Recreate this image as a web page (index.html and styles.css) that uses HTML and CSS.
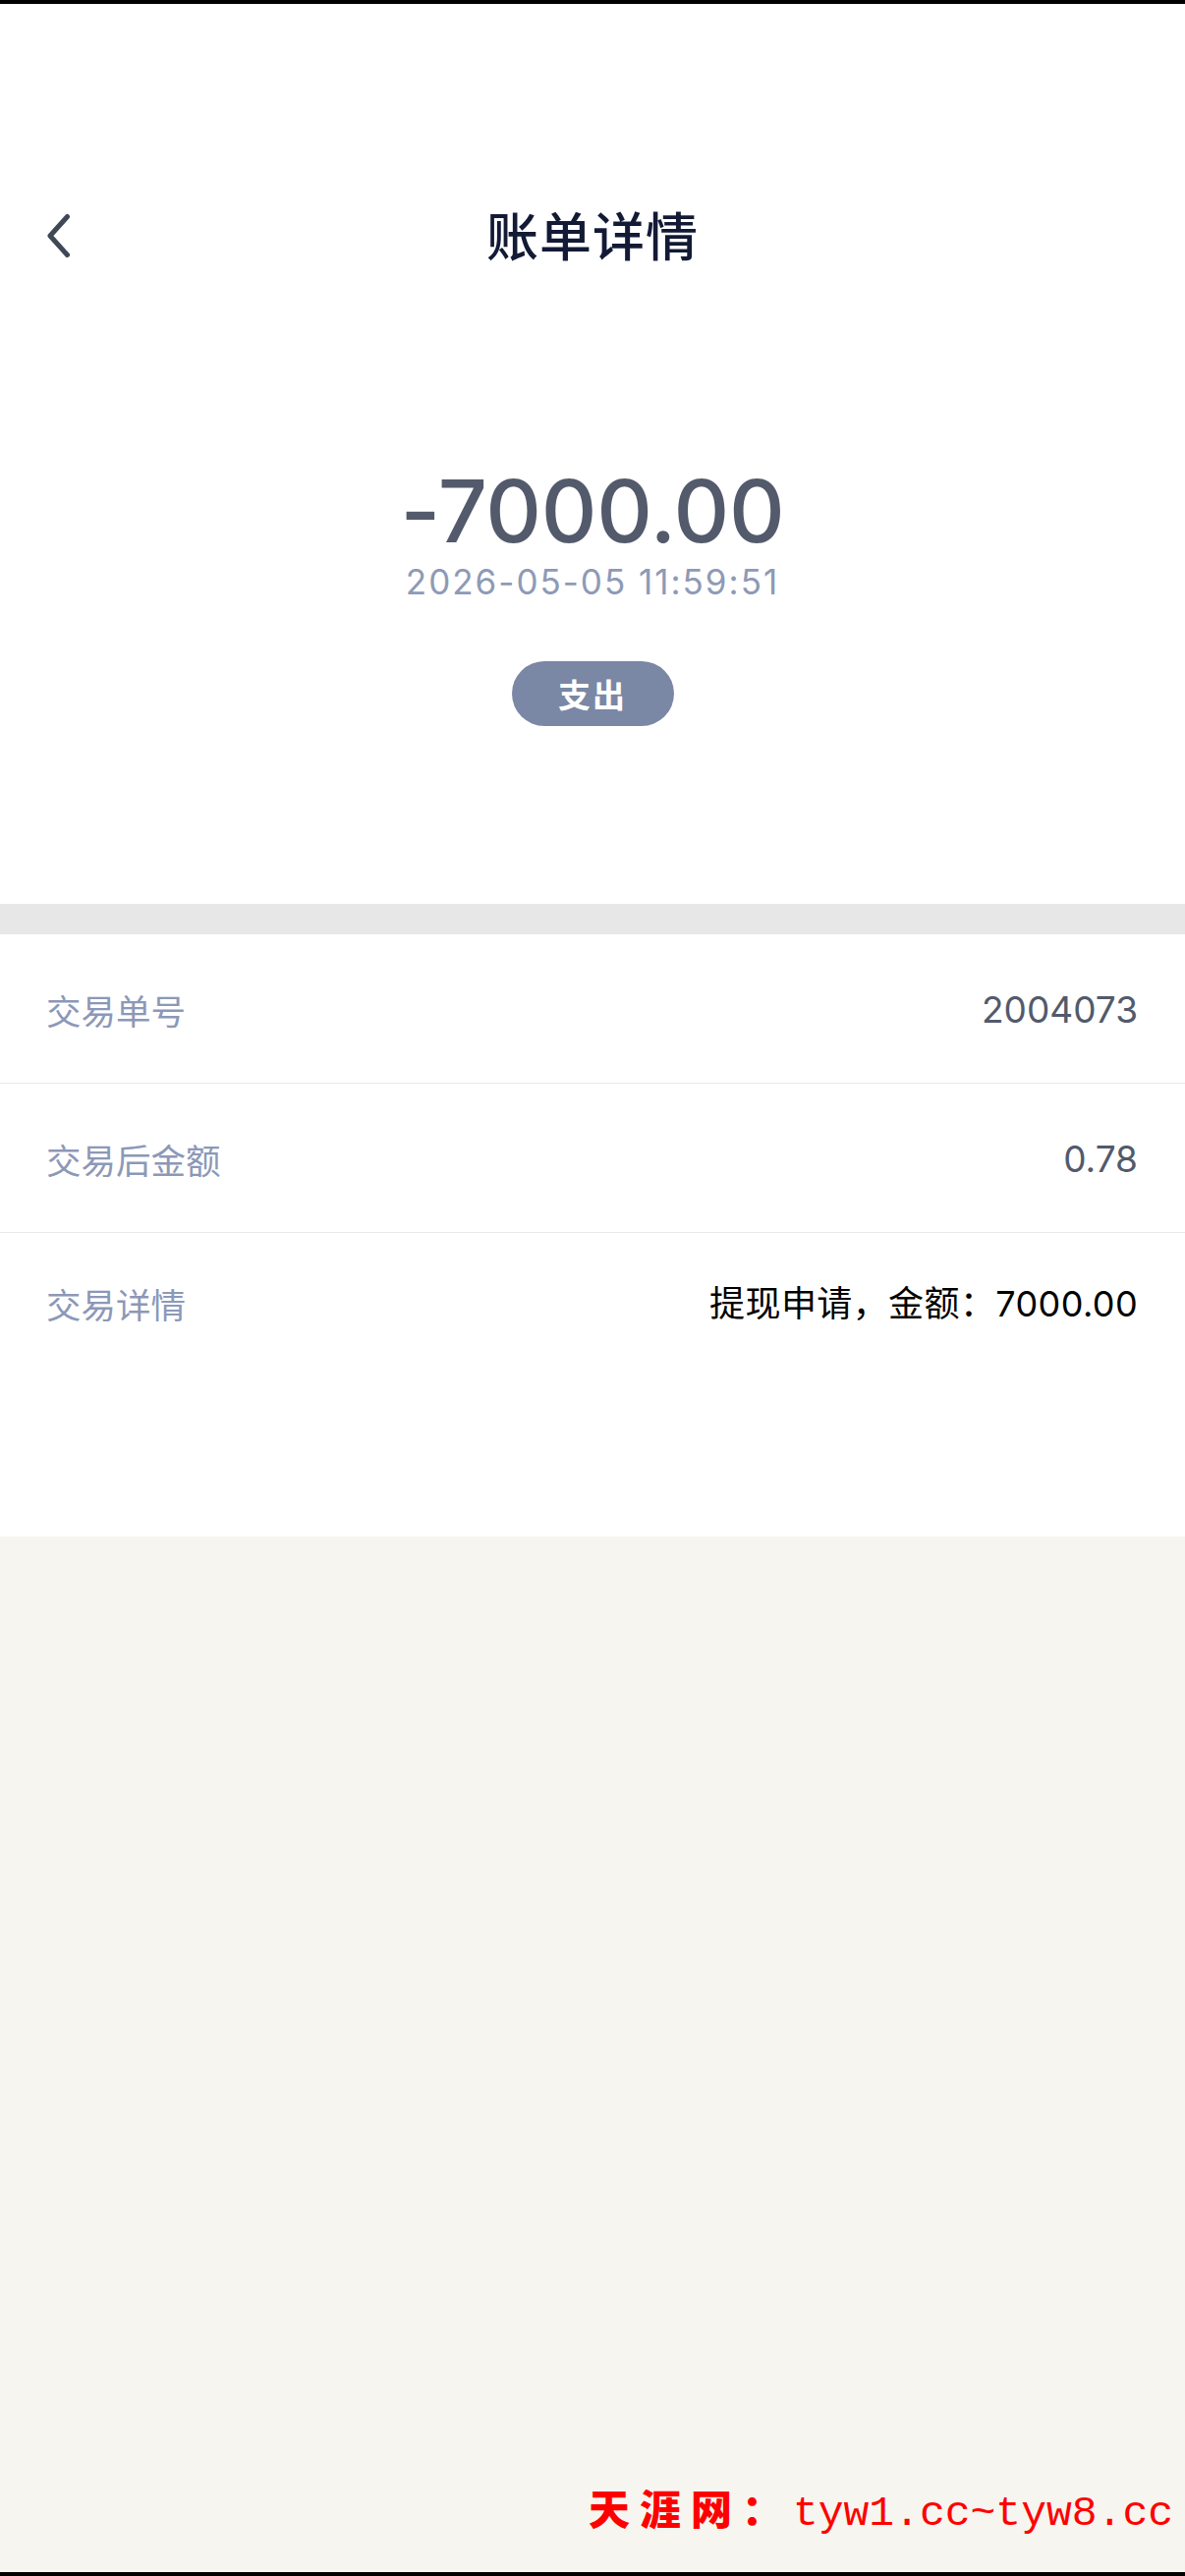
FILE: index.html
```html
<!DOCTYPE html>
<html lang="zh-CN">
<head>
<meta charset="utf-8">
<title>账单详情</title>
<link rel="stylesheet" href="styles.css">
</head>
<body>
<div class="page">
  <section class="hero">
    <header class="nav">
      <div class="nav-left">
        <svg class="back" width="26" height="46" viewBox="0 0 26 46" aria-hidden="true">
          <path d="M21.5 3.5 L4 23 L21.5 42.5" fill="none" stroke="#404755" stroke-width="5" stroke-linecap="round" stroke-linejoin="round"/>
        </svg>
      </div>
      <h1 class="title">账单详情</h1>
      <div class="nav-right"></div>
    </header>
    <div class="amount">-7000.00</div>
    <div class="date">2026-05-05 11:59:51</div>
    <div class="badge">支出</div>
  </section>
  <div class="gap"></div>
  <section class="card">
    <div class="row">
      <span class="label">交易单号</span>
      <span class="value">2004073</span>
    </div>
    <div class="row">
      <span class="label">交易后金额</span>
      <span class="value">0.78</span>
    </div>
    <div class="row row-last">
      <span class="label">交易详情</span>
      <span class="value value-dark">提现申请，金额：7000.00</span>
    </div>
  </section>
  <div class="watermark">
    <span class="wm-cn">天涯网：</span><span class="wm-url">tyw1.cc~tyw8.cc</span>
  </div>
</div>
</body>
</html>
```
FILE: styles.css
```css
html, body {
  margin: 0;
  padding: 0;
}

body {
  font-family: Inter, "Noto Sans CJK SC", sans-serif;
  background: #f6f5f0;
}

.page {
  position: relative;
  min-height: 2622px;
  box-sizing: border-box;
  border-top: 4px solid #000;
  border-bottom: 4px solid #000;
  background: #f6f5f0;
  display: flex;
  flex-direction: column;
}

.hero {
  background: #fff;
  display: flex;
  flex-direction: column;
  align-items: center;
  padding-bottom: 181px;
}

.nav {
  margin-top: 190px;
  height: 88px;
  width: 100%;
  display: grid;
  grid-template-columns: 1fr auto 1fr;
  align-items: center;
}

.nav-left {
  display: flex;
  align-items: center;
  padding-left: 47px;
  padding-top: 4px;
}

.back {
  display: block;
}

.title {
  margin: 0;
  font-family: "Noto Sans CJK SC", sans-serif;
  font-size: 53px;
  font-weight: 500;
  line-height: 88px;
  color: #131a35;
  letter-spacing: 1px;
}

.amount {
  margin-top: 194px;
  font-size: 88px;
  line-height: 1;
  font-weight: 500;
  color: #535a6b;
  letter-spacing: -0.3px;
}

.date {
  margin-top: 11px;
  font-size: 35px;
  line-height: 1;
  color: #8e9ab6;
  letter-spacing: 2px;
}

.badge {
  margin-top: 63px;
  width: 165px;
  height: 66px;
  border-radius: 33px;
  background: #7a87a5;
  color: #fff;
  font-family: "Noto Sans CJK SC", sans-serif;
  font-weight: 700;
  font-size: 33px;
  line-height: 66px;
  text-align: center;
  letter-spacing: 2px;
}

.gap {
  height: 31px;
  background: #e7e7e7;
}

.card {
  background: #fff;
  padding-bottom: 217px;
}

.row {
  display: flex;
  justify-content: space-between;
  align-items: center;
  padding: 57px 48px 54px 47px;
  line-height: 40px;
  border-bottom: 1px solid #e9e9e9;
}

.row-last {
  padding-top: 52px;
  padding-bottom: 0;
  border-bottom: none;
}

.label {
  font-family: "Noto Sans CJK SC", sans-serif;
  font-size: 35.5px;
  color: #8c98b8;
}

.value {
  font-family: Inter, "Noto Sans CJK SC", sans-serif;
  font-size: 37px;
  color: #525a6b;
}

.value-dark {
  color: #000;
  font-size: 36px;
  letter-spacing: 0.4px;
}

.watermark {
  position: absolute;
  right: 12px;
  top: 2523px;
  display: flex;
  align-items: baseline;
  color: #ff0000;
  line-height: 50px;
}

.wm-cn {
  font-family: "Noto Sans CJK SC", sans-serif;
  font-weight: 900;
  font-size: 42px;
  letter-spacing: 10px;
}

.wm-url {
  font-family: "Liberation Mono", monospace;
  font-size: 43px;
}
```
